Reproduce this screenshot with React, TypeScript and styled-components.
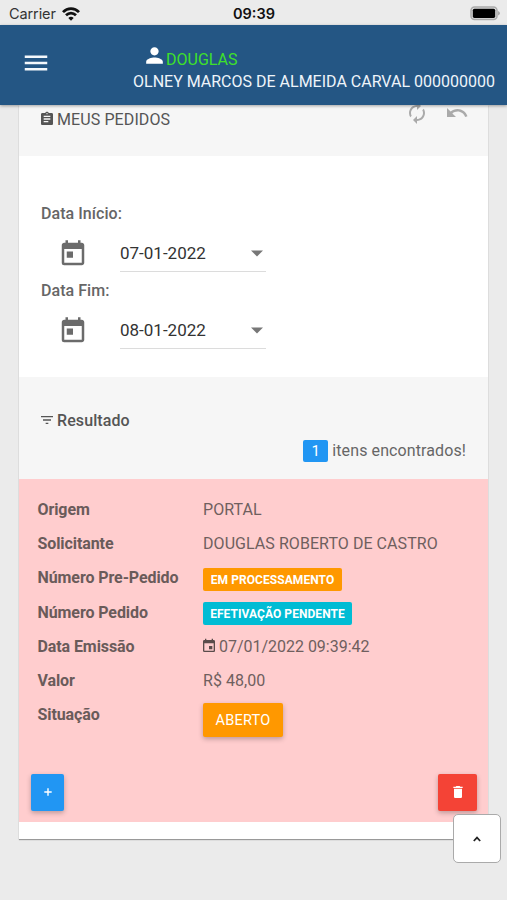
import React from "react";
import styled, { createGlobalStyle } from "styled-components";
import {
  MdAssignment,
  MdAutorenew,
  MdDelete,
  MdEvent,
  MdFilterList,
  MdMenu,
  MdPerson,
  MdToday,
  MdUndo,
} from "react-icons/md";

const GlobalStyle = createGlobalStyle`
  * { box-sizing: border-box; }
  body { margin: 0; background: #ebebeb; font-family: Roboto, sans-serif; font-size: 16px; color: #666; }
  button { font-family: inherit; border: 0; padding: 0; margin: 0; cursor: pointer; }
  svg { display: block; flex: none; }
`;

const Screen = styled.div`
  position: relative;
  width: 507px;
  height: 900px;
  overflow: hidden;
  background: #ebebeb;
  display: flex;
  flex-direction: column;
`;

const StatusBar = styled.div`
  height: 25px;
  flex: none;
  display: grid;
  grid-template-columns: 1fr auto 1fr;
  align-items: center;
  padding: 2px 7px 0 9px;
  color: #222;
  font-family: Inter, sans-serif;
`;

const Carrier = styled.div`
  display: flex;
  align-items: center;
  gap: 6px;
  font-size: 14.5px;
  letter-spacing: -0.1px;
  color: #333;
`;

const Clock = styled.div`
  margin-left: -1px;
  font-size: 14.5px;
  font-weight: 600;
  color: #111;
`;

const Battery = styled.svg`
  justify-self: end;
`;

const AppBar = styled.header`
  position: relative;
  z-index: 1;
  height: 80px;
  flex: none;
  display: flex;
  justify-content: space-between;
  padding: 0 12px 0 21px;
  background: #245684;
  box-shadow: 0 1px 3px rgba(0, 0, 0, 0.35);
  color: #fff;
`;

const MenuButton = styled.button`
  align-self: flex-start;
  margin-top: 23px;
  background: none;
  color: #f4f8fc;
`;

const Account = styled.div`
  width: 362px;
  padding-top: 17px;
  white-space: nowrap;
`;

const UserLine = styled.div`
  display: flex;
  align-items: flex-start;
  height: 28px;
  padding-left: 9px;
`;

const UserIcon = styled(MdPerson)`
  margin-top: 1px;
`;

const UserName = styled.span`
  margin: 8px 0 0 -1px;
  line-height: 20px;
  color: #3fe02a;
`;

const Company = styled.div`
  line-height: 20px;
  margin-top: 2px;
  color: #eef4fa;
`;

const Card = styled.main`
  width: 469px;
  margin-left: 19px;
  background: #fff;
  box-shadow: 0 1px 1px rgba(0, 0, 0, 0.35);
`;

const CardHeader = styled.div`
  height: 51px;
  display: flex;
  justify-content: space-between;
  padding: 0 19px 0 20px;
  background: #f6f6f6;
`;

const Heading = styled.h1`
  display: flex;
  align-items: center;
  gap: 2px;
  height: 20px;
  margin: 4px 0 0;
  font-size: 16px;
  font-weight: 400;
  letter-spacing: 0.1px;
  color: #555;
`;

const Actions = styled.div`
  display: flex;
  gap: 16px;
  margin-top: -4px;
  color: #aaa;
`;

const Filters = styled.section`
  height: 221px;
  padding: 47px 0 0 22px;
`;

const FilterLabel = styled.div`
  height: 22px;
  line-height: 22px;
  font-weight: 500;
  letter-spacing: 0.05px;
  color: #666;
`;

const DateRow = styled.div`
  display: flex;
  height: 55px;
  padding: 14px 0 0 17px;
  gap: 32px;
  color: #6b6b6b;
`;

const DateSelect = styled.div`
  width: 146px;
  height: 33px;
  display: flex;
  align-items: center;
  justify-content: space-between;
  padding: 0 3px 4px 0;
  border-bottom: 1px solid #dcdcdc;
  font-size: 17px;
  color: #333;
`;

const ResultHeader = styled.section`
  height: 102px;
  padding: 33px 22px 0 20px;
  background: #f6f6f6;
`;

const ResultTitle = styled(Heading).attrs({ as: "h2" })`
  margin: 0;
  font-weight: 500;
`;

const Found = styled.div`
  display: flex;
  justify-content: flex-end;
  gap: 4px;
  margin-top: 10px;
  height: 22px;
  line-height: 22px;
  letter-spacing: 0.1px;
`;

const Count = styled.span`
  width: 25px;
  height: 22px;
  border-radius: 2px;
  background: #2196f3;
  color: #fff;
  text-align: center;
  font-size: 15px;
`;

const Order = styled.article`
  height: 343px;
  padding: 15px 11px 0 12px;
  background: #ffcdce;
  display: flex;
  flex-direction: column;
`;

const Details = styled.dl`
  margin: 0 0 0 6.5px;
  display: grid;
  grid-template-columns: 165.5px 1fr;
  grid-auto-rows: 34.2px;
  line-height: 34px;
`;

const Term = styled.dt`
  font-weight: 700;
  height: 34px;
  line-height: 34px;
  margin-top: -1px;
  letter-spacing: -0.09px;
  color: #6a5b5a;
`;

const Value = styled.dd`
  margin: -1px 0 0;
  height: 34px;
  display: flex;
  align-items: center;
  gap: 2px;
  white-space: nowrap;
  letter-spacing: 0.06px;
  color: #6f5f5e;
`;

const EmissionDate = styled.time`
  letter-spacing: -0.02px;
`;

const EmissionIcon = styled(MdEvent)`
  margin: -2px 0 0 -2px;
  color: #5a4c4b;
`;

const Badge = styled.span<{ $bg: string; $width: number }>`
  width: ${(p) => p.$width}px;
  height: 23px;
  margin-top: 2px;
  border-radius: 2px;
  background: ${(p) => p.$bg};
  color: #fff;
  font-size: 12px;
  font-weight: 700;
  line-height: 24px;
  text-align: center;
`;

const RaisedButton = styled.button<{ $bg: string; $width: number; $height: number }>`
  width: ${(p) => p.$width}px;
  height: ${(p) => p.$height}px;
  flex: none;
  display: flex;
  align-items: center;
  justify-content: center;
  border-radius: 2px;
  background: ${(p) => p.$bg};
  color: #fff;
  font-size: 14.5px;
  box-shadow: 0 2px 5px rgba(0, 0, 0, 0.26);
`;

const StatusButton = styled(RaisedButton)`
  align-self: flex-start;
  margin-top: 5px;
  letter-spacing: 0.25px;
`;

const OrderActions = styled.div`
  display: flex;
  justify-content: space-between;
  margin-top: 40.6px;
`;

const CardFooter = styled.div`
  height: 17px;
`;

const ScrollTop = styled.button`
  position: absolute;
  right: 6px;
  bottom: 37px;
  width: 48px;
  height: 49px;
  display: flex;
  align-items: center;
  justify-content: center;
  background: #fff;
  border: 1px solid #aaa;
  border-radius: 5px;
`;

const Wifi = () => (
  <svg width="18" height="14" viewBox="0 0 18 14" fill="none" stroke="#111" strokeWidth="2.7">
    <path d="M1 5.2C5.5 0.4 12.5 0.4 17 5.2" />
    <path d="M4 8.3C6.9 5.4 11.1 5.4 14 8.3" />
    <path d="M9 13.7 6.3 10.9Q9 8.7 11.7 10.9Z" fill="#111" stroke="none" />
  </svg>
);

const Caret = () => (
  <svg width="12" height="7" viewBox="0 0 12 7">
    <path d="M0 .5H12L6 6.5Z" fill="#777" />
  </svg>
);

const filters = [
  { label: "Data Início:", date: "07-01-2022" },
  { label: "Data Fim:", date: "08-01-2022" },
];

export default function App() {
  return (
    <Screen>
      <GlobalStyle />
      <StatusBar>
        <Carrier>
          Carrier <Wifi />
        </Carrier>
        <Clock>09:39</Clock>
        <Battery width="30" height="15" viewBox="0 0 30 15">
          <rect x="1" y="1" width="26" height="12.5" rx="3.5" fill="#ddd" stroke="#aaa" strokeWidth="1.5" />
          <rect x="2.8" y="2.7" width="22.4" height="9.2" rx="1.6" fill="#000" />
          <path d="M28 5v4.6q2-.8 2-2.3T28 5Z" fill="#aaa" />
        </Battery>
      </StatusBar>
      <AppBar>
        <MenuButton aria-label="Menu">
          <MdMenu size={30} />
        </MenuButton>
        <Account>
          <UserLine>
            <UserIcon size={25} />
            <UserName>DOUGLAS</UserName>
          </UserLine>
          <Company>OLNEY MARCOS DE ALMEIDA CARVAL 000000000</Company>
        </Account>
      </AppBar>
      <Card>
        <CardHeader>
          <Heading>
            <MdAssignment size={16} />
            MEUS PEDIDOS
          </Heading>
          <Actions>
            <MdAutorenew size={24} />
            <MdUndo size={24} />
          </Actions>
        </CardHeader>
        <Filters>
          {filters.map((f) => (
            <React.Fragment key={f.label}>
              <FilterLabel>{f.label}</FilterLabel>
              <DateRow>
                <MdToday size={30} />
                <DateSelect>
                  {f.date}
                  <Caret />
                </DateSelect>
              </DateRow>
            </React.Fragment>
          ))}
        </Filters>
        <ResultHeader>
          <ResultTitle>
            <MdFilterList size={16} />
            Resultado
          </ResultTitle>
          <Found>
            <Count>1</Count>
            <span>itens encontrados!</span>
          </Found>
        </ResultHeader>
        <Order>
          <Details>
            <Term>Origem</Term>
            <Value>PORTAL</Value>
            <Term>Solicitante</Term>
            <Value>DOUGLAS ROBERTO DE CASTRO</Value>
            <Term>Número Pre-Pedido</Term>
            <Value>
              <Badge $bg="#ff9800" $width={139}>EM PROCESSAMENTO</Badge>
            </Value>
            <Term>Número Pedido</Term>
            <Value>
              <Badge $bg="#00bcd4" $width={149}>EFETIVAÇÃO PENDENTE</Badge>
            </Value>
            <Term>Data Emissão</Term>
            <Value>
              <EmissionIcon size={16} />
              <EmissionDate>07/01/2022 09:39:42</EmissionDate>
            </Value>
            <Term>Valor</Term>
            <Value>R$ 48,00</Value>
            <Term>Situação</Term>
            <Value>
              <StatusButton $bg="#ff9800" $width={80} $height={34}>ABERTO</StatusButton>
            </Value>
          </Details>
          <OrderActions>
            <RaisedButton $bg="#2196f3" $width={33} $height={37} aria-label="Expandir">
              <svg width="8" height="8" viewBox="0 0 8 8" stroke="#fff" strokeWidth="1.4">
                <path d="M4 .3V7.7M.3 4H7.7" />
              </svg>
            </RaisedButton>
            <RaisedButton $bg="#f44336" $width={39} $height={37} aria-label="Excluir">
              <MdDelete size={16} />
            </RaisedButton>
          </OrderActions>
        </Order>
        <CardFooter />
      </Card>
      <ScrollTop aria-label="Voltar ao topo">
        <svg width="8" height="6" viewBox="0 0 8 6" fill="none" stroke="#222" strokeWidth="1.7">
          <path d="M.8 5 4 1.6 7.2 5" />
        </svg>
      </ScrollTop>
    </Screen>
  );
}
